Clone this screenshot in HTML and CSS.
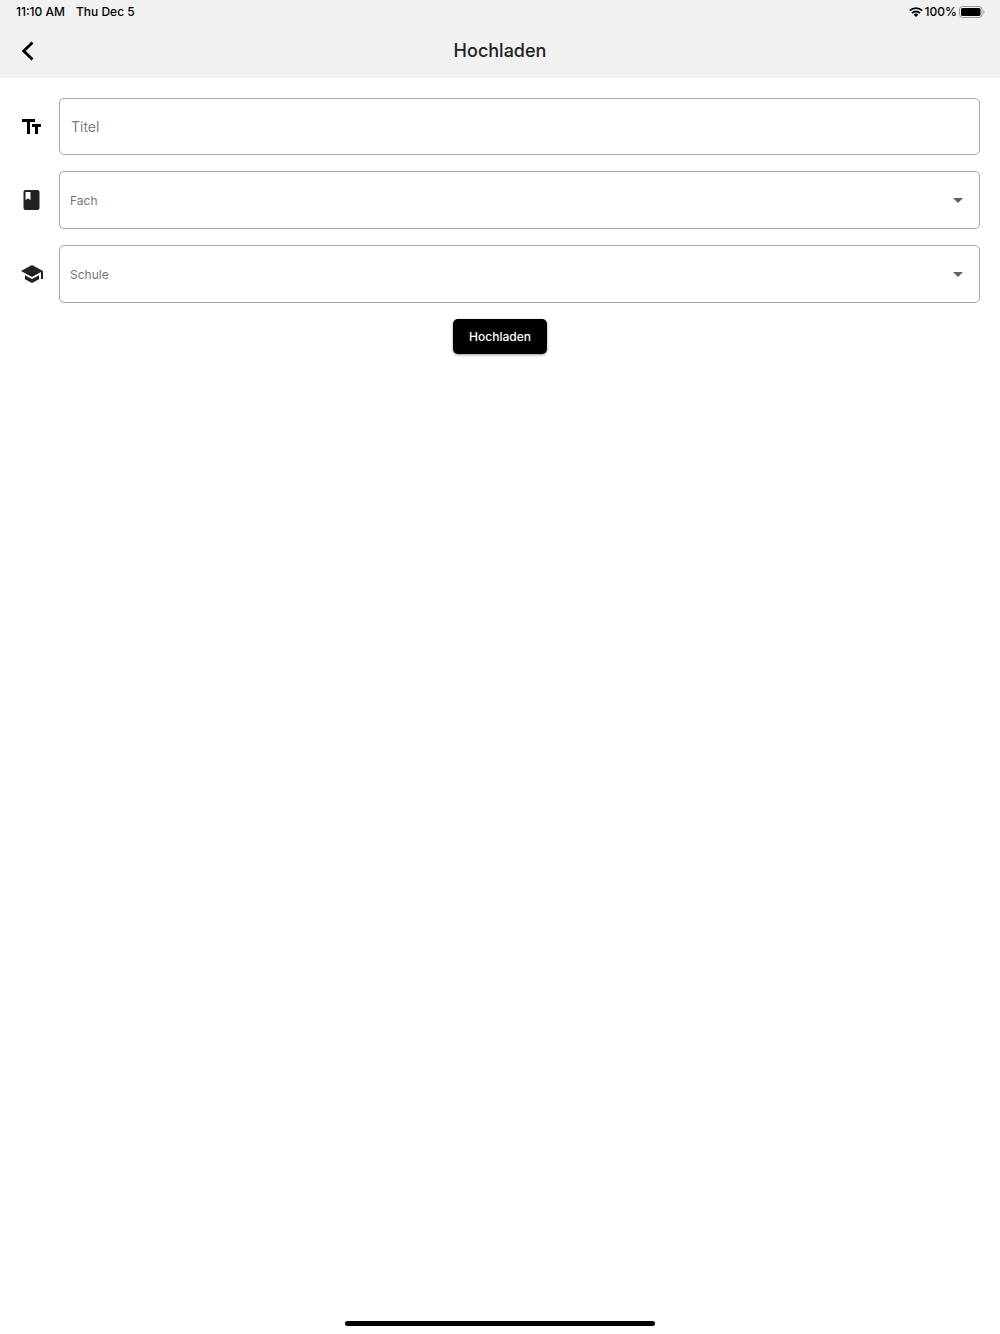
FILE: index.html
```html
<!DOCTYPE html>
<html lang="de">
<head>
    <meta charset="UTF-8">
    <meta name="viewport" content="width=device-width,initial-scale=1.0">
    <title>Hochladen</title>
    <link rel="stylesheet" href="styles.css">
</head>
<body>
<header class="top">
    <!--status bar-->
    <div class="status">
        <div class="status_left"><span>11:10 AM</span><span>Thu Dec 5</span></div>
        <div class="status_right">
            <svg class="wifi" viewBox="0 0 14 10" aria-hidden="true">
                <path d="M.8 3.700a8.800 8.800 0 0 1 12.400 0M3 6.100a5.700 5.700 0 0 1 8 0" fill="none" stroke="#000" stroke-width="1.900"/>
                <path d="M4.700 7.700a3.300 3.300 0 0 1 4.600 0L7 10z"/>
            </svg>
            <span>100%</span>
            <svg class="battery" viewBox="0 0 26 12" aria-hidden="true">
                <rect x=".5" y=".5" width="22.5" height="11" rx="3" fill="none" stroke="#999"/>
                <rect x="2" y="2" width="19.5" height="8" rx="1.5"/>
                <path d="M24.3 4v4c1.600-.5 1.600-3.500 0-4z" fill="#999"/>
            </svg>
        </div>
    </div>
    <div class="navbar">
        <button class="back" type="button" aria-label="Zurück">
            <svg viewBox="0 0 24 24" aria-hidden="true"><path d="M16.500 3.500 7.800 12l8.700 8.500" fill="none" stroke="#000" stroke-width="2.900"/></svg>
        </button>
        <h1>Hochladen</h1>
    </div>
</header>
<main>
    <form class="upload">
        <div class="row">
            <label class="icon icon_title" for="titel" aria-label="Titel">
                <svg viewBox="0 0 24 24" aria-hidden="true"><path d="M2 4v3h5v12h3V7h5V4H2zm19 5h-9v3h3v7h3v-7h3V9z"/></svg>
            </label>
            <input class="field" type="text" id="titel" placeholder="Titel">
        </div>
        <div class="row">
            <label class="icon" for="fach" aria-label="Fach">
                <svg viewBox="0 0 24 24" aria-hidden="true"><path d="M17.500 2h-12c-1.100 0-2 .9-2 2v16c0 1.100.9 2 2 2h12c1.100 0 2-.9 2-2V4c0-1.100-.9-2-2-2zM5.500 4h5v8L8 10.500 5.500 12V4z"/></svg>
            </label>
            <div class="select_box">
                <select class="field" id="fach"><option>Fach</option></select>
                <svg class="arrow" viewBox="0 0 24 24" aria-hidden="true"><path d="M7 10l5 5 5-5z"/></svg>
            </div>
        </div>
        <div class="row">
            <label class="icon" for="schule" aria-label="Schule">
                <svg viewBox="0 0 24 24" aria-hidden="true"><path d="M5 13.180v4L12 21l7-3.820v-4L12 17l-7-3.820zM12 3L1 9l11 6 9-4.910V17h2V9L12 3z"/></svg>
            </label>
            <div class="select_box">
                <select class="field" id="schule"><option>Schule</option></select>
                <svg class="arrow" viewBox="0 0 24 24" aria-hidden="true"><path d="M7 10l5 5 5-5z"/></svg>
            </div>
        </div>
        <button class="submit" type="button">Hochladen</button>
    </form>
</main>
<footer class="home"><div class="home_bar"></div></footer>
</body>
</html>
```

FILE: styles.css
```css
*{box-sizing:border-box;}
body{display:flex;flex-direction:column;min-height:100vh;margin:0;background:#fff;color:#212121;font-family:Inter,"Liberation Sans",sans-serif;}
svg{display:block;}
button,input,select{font-family:inherit;}

/*header*/
.top{background:#f1f1f1;}
.status{display:flex;justify-content:space-between;height:24px;padding:0 15px 0 16px;color:#000;font-size:12px;font-weight:500;line-height:24px;}
.status_left{display:flex;gap:11px;}
.status_right{display:flex;align-items:center;gap:2px;}
.wifi{width:14px;height:10px;}
.battery{width:26px;height:12px;}
.navbar{display:grid;grid-template-columns:40px 1fr 40px;align-items:center;height:54px;padding:0 8px;}
.navbar h1{margin:0;font-size:18px;font-weight:500;line-height:24px;text-align:center;}
.back{display:flex;align-items:center;justify-content:center;width:40px;height:40px;padding:0;border:0;background:none;cursor:pointer;}
.back svg{width:24px;height:24px;}

/*form*/
.upload{display:flex;flex-direction:column;gap:16px;padding:20px;}
.row{display:flex;align-items:center;gap:15px;}
.icon{flex:none;width:24px;}
.icon svg{width:24px;height:24px;fill:#212121;}
.icon_title svg{fill:#000;}
.field{flex:1;width:100%;min-width:0;height:57px;padding:0 11px;border:1px solid #a6a6a6;border-radius:5px;background:#fff;color:#757575;font-size:14px;}
.field::placeholder{color:#808080;opacity:1;}
.select_box{position:relative;flex:1;}
.select_box .field{display:block;height:58px;padding:0 40px 0 10px;font-size:12px;appearance:none;}
.arrow{position:absolute;top:17px;right:10px;width:24px;height:24px;fill:#616161;pointer-events:none;}
.submit{align-self:center;height:35px;padding:0 16px;border:0;border-radius:5px;background:#000;color:#fff;font-size:12px;font-weight:500;box-shadow:0 1px 3px rgba(0,0,0,.4);cursor:pointer;}

/*home indicator*/
.home{display:flex;justify-content:center;margin-top:auto;padding-bottom:8px;}
.home_bar{width:31%;height:5px;border-radius:3px;background:#000;}
```
